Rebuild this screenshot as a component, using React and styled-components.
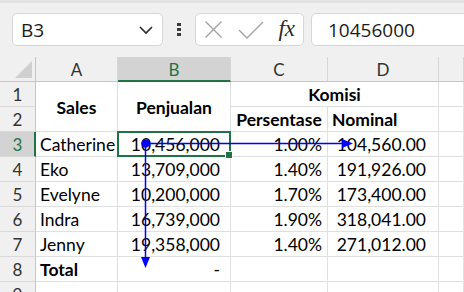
import React from 'react';
import styled, { createGlobalStyle, css } from 'styled-components';

const GlobalStyle = createGlobalStyle`
    html, body {
        margin: 0;
        padding: 0;
        background: #f0f0f0;
        overflow: hidden;
    }
    body {
        font-family: "Lato", "Liberation Sans", sans-serif;
    }
`;

const green = '#217346';

const Page = styled.div`
    width: 464px;
    height: 292px;
    overflow: hidden;
    background: #f0f0f0;
`;

const Toolbar = styled.div`
    height: 57px;
    box-sizing: border-box;
    border-top: 3px solid #e3e3e3;
    display: flex;
    align-items: center;
    padding: 0 0 1px 12px;
    overflow: hidden;
`;

const Box = styled.div`
    height: 33px;
    box-sizing: border-box;
    background: #fff;
    border: 1px solid #d6d6d6;
    border-radius: 5px;
    display: flex;
    align-items: center;
    flex-shrink: 0;
`;

const NameBox = styled(Box)`
    width: 151px;
    padding: 0 8px 0 8px;
    justify-content: space-between;
    font-family: "Open Sans", "Noto Sans", sans-serif;
    font-size: 19px;
    color: #1b1b1b;
`;

const Dots = styled.div`
    width: 32px;
    flex-shrink: 0;
    display: flex;
    flex-direction: column;
    align-items: center;
    gap: 2px;
    span {
        width: 4px;
        height: 3px;
        background: #3a3a3a;
    }
`;

const FuncBox = styled(Box)`
    width: 109px;
    padding: 0 8px 0 8px;
    justify-content: space-between;
`;

const Fx = styled.span`
    font-family: "Liberation Serif", "DejaVu Serif", serif;
    font-style: italic;
    font-size: 23px;
    color: #2a2a2a;
    line-height: 1;
    margin-top: -3px;
`;

const FormulaBox = styled(Box)`
    width: 200px;
    margin-left: 7px;
    padding-left: 16px;
    font-family: "Open Sans", "Noto Sans", sans-serif;
    font-size: 19px;
    color: #1b1b1b;
`;

const Sheet = styled.div`
    position: relative;
    display: grid;
    grid-template-columns: 36px 82px 113px 97px 111px 1fr;
    grid-auto-rows: 25px;
    background: #fff;
`;

const Corner = styled.div`
    background: #f0f0f0;
    border-right: 1px solid #c6c6c6;
    border-bottom: 1px solid #c6c6c6;
    position: relative;
    &::after {
        content: '';
        position: absolute;
        right: 3px;
        bottom: 3px;
        border-style: solid;
        border-width: 0 0 17px 17px;
        border-color: transparent transparent #cfcfcf transparent;
    }
`;

const ColHead = styled.div`
    background: ${p => (p.$active ? '#d3d3d3' : '#f0f0f0')};
    border-right: 1px solid #d6d6d6;
    border-bottom: ${p => (p.$active ? `2px solid ${green}` : '1px solid #c6c6c6')};
    color: ${p => (p.$active ? green : '#333')};
    font-size: 17px;
    display: flex;
    align-items: center;
    justify-content: center;
    padding-top: 1px;
`;

const RowHead = styled.div`
    background: ${p => (p.$active ? '#d3d3d3' : '#f0f0f0')};
    border-right: ${p => (p.$active ? `2px solid ${green}` : '1px solid #c6c6c6')};
    border-bottom: 1px solid #d9d9d9;
    color: ${p => (p.$active ? green : '#333')};
    font-size: 17px;
    display: flex;
    align-items: center;
    justify-content: center;
    padding-left: ${p => (p.$active ? '1px' : '0')};
`;

const Cell = styled.div`
    position: relative;
    border-right: 1px solid #e0e0e0;
    border-bottom: 1px solid #e0e0e0;
    font-size: 17.5px;
    color: #000;
    white-space: nowrap;
    display: flex;
    align-items: center;
    padding: 1px ${p => p.$pr || 4}px 0 ${p => p.$pl || 4}px;
    font-weight: ${p => (p.$bold ? 700 : 400)};
    justify-content: ${p =>
        p.$align === 'right' ? 'flex-end' : p.$align === 'center' ? 'center' : 'flex-start'};
    ${p => p.$col && css`grid-column: ${p.$col};`}
    ${p => p.$row && css`grid-row: ${p.$row};`}
    ${p =>
        p.$selected &&
        css`
            &::after {
                content: '';
                position: absolute;
                inset: -1px -1px -1px -1px;
                border: 2px solid ${green};
                z-index: 2;
            }
            &::before {
                content: '';
                position: absolute;
                right: -3px;
                bottom: -3px;
                width: 6px;
                height: 6px;
                background: ${green};
                border: 1px solid #fff;
                z-index: 3;
            }
        `}
`;

const Tracer = styled.svg`
    position: absolute;
    left: 0;
    top: 0;
    width: 464px;
    height: 240px;
    pointer-events: none;
    z-index: 5;
`;

const rows = [
    ['Catherine', '10,456,000', '1.00%', '104,560.00'],
    ['Eko', '13,709,000', '1.40%', '191,926.00'],
    ['Evelyne', '10,200,000', '1.70%', '173,400.00'],
    ['Indra', '16,739,000', '1.90%', '318,041.00'],
    ['Jenny', '19,358,000', '1.40%', '271,012.00'],
];

function Chevron() {
    return (
        <svg width="16" height="10" viewBox="0 0 16 10">
            <path d="M2 2 L8 8 L14 2" fill="none" stroke="#2b2b2b" strokeWidth="1.6" />
        </svg>
    );
}

function Cross() {
    return (
        <svg width="19" height="19" viewBox="0 0 19 19">
            <path d="M1.5 1.5 L17.5 17.5 M17.5 1.5 L1.5 17.5" stroke="#a3a3a3" strokeWidth="1.4" fill="none" />
        </svg>
    );
}

function Check() {
    return (
        <svg width="26" height="18" viewBox="0 0 26 18">
            <path d="M1 9 L9 17 L25 1" stroke="#a3a3a3" strokeWidth="1.4" fill="none" />
        </svg>
    );
}

function App() {
    return (
        <Page>
            <GlobalStyle />
            <Toolbar>
                <NameBox>
                    <span>B3</span>
                    <Chevron />
                </NameBox>
                <Dots>
                    <span />
                    <span />
                    <span />
                </Dots>
                <FuncBox>
                    <Cross />
                    <Check />
                    <Fx>fx</Fx>
                </FuncBox>
                <FormulaBox>10456000</FormulaBox>
            </Toolbar>
            <Sheet>
                <Corner />
                <ColHead>A</ColHead>
                <ColHead $active>B</ColHead>
                <ColHead>C</ColHead>
                <ColHead>D</ColHead>
                <ColHead />

                <RowHead>1</RowHead>
                <Cell $col="2" $row="2 / span 2" $bold $align="center">Sales</Cell>
                <Cell $col="3" $row="2 / span 2" $bold $align="center">Penjualan</Cell>
                <Cell $col="4 / span 2" $row="2" $bold $align="center">Komisi</Cell>
                <Cell $col="6" $row="2" />
                <RowHead>2</RowHead>
                <Cell $col="4" $row="3" $bold $align="center" $pl={2} $pr={2}>Persentase</Cell>
                <Cell $col="5" $row="3" $bold>Nominal</Cell>
                <Cell $col="6" $row="3" />

                {rows.map((r, i) => (
                    <React.Fragment key={r[0]}>
                        <RowHead $active={i === 0}>{i + 3}</RowHead>
                        <Cell>{r[0]}</Cell>
                        <Cell $align="right" $pr={10} $selected={i === 0}>{r[1]}</Cell>
                        <Cell $align="right" $pr={5}>{r[2]}</Cell>
                        <Cell $align="right" $pr={12}>{r[3]}</Cell>
                        <Cell />
                    </React.Fragment>
                ))}

                <RowHead>8</RowHead>
                <Cell $bold>Total</Cell>
                <Cell $align="right" $pr={10}>-</Cell>
                <Cell />
                <Cell />
                <Cell />

                <RowHead>9</RowHead>
                <Cell />
                <Cell />
                <Cell />
                <Cell />
                <Cell />

                <Tracer viewBox="0 0 464 240">
                    <line x1="145.5" y1="86.5" x2="344" y2="86.5" stroke="#0000ff" strokeWidth="1.5" />
                    <polygon points="342,82 353,86.5 342,91" fill="#0000ff" />
                    <line x1="145.5" y1="86.5" x2="145.5" y2="202" stroke="#0000ff" strokeWidth="1.5" />
                    <polygon points="141,200 145.5,211 150,200" fill="#0000ff" />
                    <circle cx="145.5" cy="86.5" r="4.2" fill="#0000ff" />
                </Tracer>
            </Sheet>
        </Page>
    );
}

export default App;
